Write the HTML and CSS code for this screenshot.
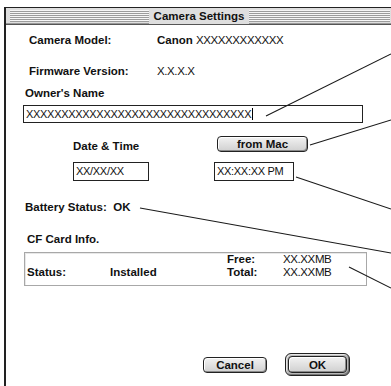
FILE: index.html
```html
<!DOCTYPE html>
<html lang="en">
<head>
  <meta charset="UTF-8" />
  <title>Camera Settings</title>
  <link rel="stylesheet" href="styles.css">
</head>
<body>
  <div class="window">
    <div class="titlebar">
      <div class="stripes"></div>
      <span class="title">Camera Settings</span>
    </div>

    <div class="content">
      <div class="info-row first">
        <span class="info-label">Camera Model:</span>
        <span class="info-value">Canon <span class="xs">XXXXXXXXXXXX</span></span>
      </div>
      <div class="info-row second">
        <span class="info-label">Firmware Version:</span>
        <span class="info-value"><span class="xs">X.X.X.X</span></span>
      </div>

      <div class="owner-label">Owner's Name</div>
      <div class="field owner-field"><span class="caret">XXXXXXXXXXXXXXXXXXXXXXXXXXXXXXXX</span></div>

      <div class="date-grid">
        <div class="date-label">Date &amp; Time</div>
        <button class="btn from-mac">from Mac</button>
        <div class="field date-field">XX/XX/XX</div>
        <div class="field time-field">XX:XX:XX PM</div>
      </div>

      <div class="battery">Battery Status:&nbsp; OK</div>

      <div class="cf-label">CF Card Info.</div>
      <div class="cf-box">
        <span class="cf-status-label">Status:</span>
        <span class="cf-status-value">Installed</span>
        <span class="cf-free-label">Free:</span>
        <span class="cf-free-value xs">XX.XXMB</span>
        <span class="cf-total-label">Total:</span>
        <span class="cf-total-value xs">XX.XXMB</span>
      </div>

      <div class="actions">
        <button class="btn cancel">Cancel</button>
        <div class="default-ring">
          <button class="btn ok">OK</button>
        </div>
      </div>
    </div>
  </div>

  <!-- callout lines pointing out of the dialog -->
  <svg class="callouts" width="391" height="386" viewBox="0 0 391 386">
    <line x1="266" y1="116" x2="391" y2="54" />
    <line x1="310" y1="145" x2="391" y2="120" />
    <line x1="296" y1="177" x2="391" y2="209" />
    <line x1="140" y1="208" x2="391" y2="253" />
    <line x1="349" y1="267" x2="391" y2="288" />
  </svg>
</body>
</html>
```

FILE: styles.css
```css
body {
  margin: 0;
  width: 391px;
  height: 386px;
  overflow: hidden;
  background: #fff;
  font-family: "Liberation Sans", Arial, sans-serif;
  font-size: 11.5px;
  font-weight: bold;
  color: #111;
}
.window {
  margin: 7px 0 0 4px;
  width: 386px;
  height: 378px;
  border-top: 1px solid #222;
  border-left: 2px solid #222;
  background: #fff;
}
.titlebar {
  position: relative;
  height: 16px;
  background: #dedede;
  border-bottom: 1px solid #555;
  box-shadow: inset 0 -1px #999;
  display: flex;
  justify-content: center;
  align-items: center;
}
.stripes {
  position: absolute;
  left: 4px;
  right: 2px;
  top: 2px;
  height: 12px;
  background: repeating-linear-gradient(to bottom, #f6f6f6 0 1px, #9c9c9c 1px 2px);
}
.title {
  position: relative;
  background: #dedede;
  padding: 0 5px;
  line-height: 16px;
}
.content {
  padding-left: 17px;
}
.info-row {
  display: flex;
  padding-left: 6px;
  line-height: 14px;
}
.info-row.first {
  margin-top: 8px;
}
.info-row.second {
  margin-top: 17px;
}
.info-label {
  width: 128px;
}
.xs {
  font-weight: normal;
  letter-spacing: -0.4px;
}
.owner-label {
  margin-top: 8px;
  padding-left: 2px;
  line-height: 14px;
}
.field {
  box-sizing: border-box;
  border: 1px solid #222;
  background: #fff;
  font-weight: normal;
  font-size: 11px;
  letter-spacing: -0.3px;
  padding-left: 2px;
  white-space: nowrap;
  overflow: hidden;
}
.owner-field {
  margin-top: 5px;
  width: 340px;
  height: 18px;
  line-height: 16px;
}
.caret {
  border-right: 1px solid #000;
  padding-right: 1px;
}
.date-grid {
  display: grid;
  grid-template-columns: 141px auto;
  row-gap: 9px;
  margin-top: 13px;
  margin-left: 50px;
}
.date-label {
  padding-top: 3px;
  line-height: 14px;
}
.btn {
  font-family: "Liberation Sans", Arial, sans-serif;
  font-size: 11.5px;
  font-weight: bold;
  color: #111;
  height: 16px;
  padding: 0;
  border: 1px solid #222;
  border-radius: 4px;
  background: linear-gradient(#f2f2f2, #d0d0d0);
  box-shadow: inset 1px 1px #fff, inset -1px -1px #8a8a8a;
  line-height: 14px;
}
.from-mac {
  align-self: start;
  margin-left: 3px;
  width: 91px;
}
.date-field {
  width: 76px;
  height: 19px;
  line-height: 17px;
}
.time-field {
  width: 80px;
  height: 19px;
  line-height: 17px;
}
.battery {
  margin-top: 19px;
  padding-left: 2px;
  line-height: 14px;
}
.cf-label {
  margin-top: 18px;
  padding-left: 4px;
  line-height: 14px;
}
.cf-box {
  box-sizing: border-box;
  margin-top: 6px;
  margin-left: 1px;
  width: 343px;
  height: 34px;
  border: 1px solid #a8a8a8;
  box-shadow: inset 1px 1px #e8e8e8;
  padding-left: 2px;
  display: grid;
  grid-template-columns: 83px 117px 56px auto;
  grid-template-rows: 13px 13px;
  line-height: 13px;
}
.cf-status-label {
  grid-column: 1;
  grid-row: 2;
}
.cf-status-value {
  grid-column: 2;
  grid-row: 2;
}
.cf-free-label {
  grid-column: 3;
  grid-row: 1;
}
.cf-free-value {
  grid-column: 4;
  grid-row: 1;
}
.cf-total-label {
  grid-column: 3;
  grid-row: 2;
}
.cf-total-value {
  grid-column: 4;
  grid-row: 2;
}
.actions {
  display: flex;
  align-items: center;
  gap: 18px;
  margin-top: 67px;
  margin-left: 180px;
}
.cancel {
  width: 64px;
}
.default-ring {
  box-sizing: border-box;
  width: 65px;
  height: 23px;
  padding: 2px;
  border: 1px solid #222;
  border-radius: 6px;
  background: #b8b8b8;
  box-shadow: inset 1px 1px #e6e6e6, inset -1px -1px #777;
}
.ok {
  width: 59px;
  height: 17px;
}
.callouts {
  position: absolute;
  top: 0;
  left: 0;
  pointer-events: none;
}
.callouts line {
  stroke: #1a1a1a;
  stroke-width: 1.1;
}
```
